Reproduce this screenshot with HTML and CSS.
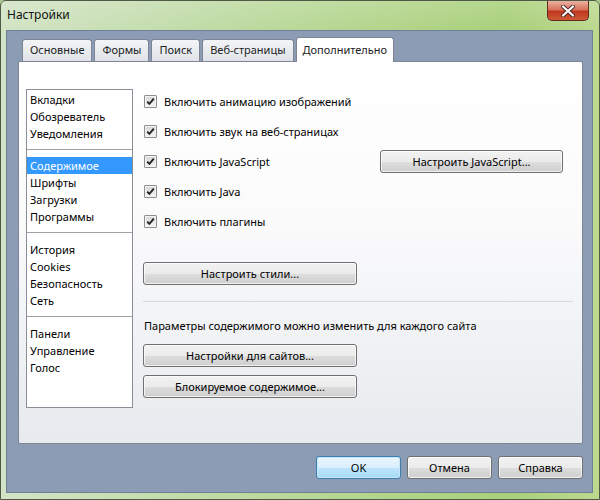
FILE: index.html
```html
<!DOCTYPE html>
<html lang="ru">

<head>
    <meta charset="UTF-8">
    <title>Настройки</title>
    <link rel="stylesheet" href="styles.css">
</head>

<body>
    <div class="window">
        <div class="titlebar">
            <span class="title">Настройки</span>
            <span class="close">
                <svg width="16" height="12" viewBox="0 0 16 12">
                    <path d="M3 1.5 L13 10.5 M13 1.5 L3 10.5" stroke="#4a2a24" stroke-width="4" stroke-linecap="round" />
                    <path d="M3 1.5 L13 10.5 M13 1.5 L3 10.5" stroke="#fff" stroke-width="2.2" stroke-linecap="round" />
                </svg>
            </span>
        </div>
        <div class="client">
            <div class="tabs">
                <div class="tab">Основные</div>
                <div class="tab">Формы</div>
                <div class="tab">Поиск</div>
                <div class="tab">Веб-страницы</div>
                <div class="tab active">Дополнительно</div>
            </div>
            <div class="panel">
                <div class="list">
                    <div class="group first">
                        <div class="item">Вкладки</div>
                        <div class="item">Обозреватель</div>
                        <div class="item">Уведомления</div>
                    </div>
                    <div class="group second">
                        <div class="item selected">Содержимое</div>
                        <div class="item">Шрифты</div>
                        <div class="item">Загрузки</div>
                        <div class="item">Программы</div>
                    </div>
                    <div class="group">
                        <div class="item">История</div>
                        <div class="item">Cookies</div>
                        <div class="item">Безопасность</div>
                        <div class="item">Сеть</div>
                    </div>
                    <div class="group last">
                        <div class="item">Панели</div>
                        <div class="item">Управление</div>
                        <div class="item">Голос</div>
                    </div>
                </div>
                <div class="content">
                    <div class="row"><span class="check"></span>Включить анимацию изображений</div>
                    <div class="row"><span class="check"></span>Включить звук на веб-страницах</div>
                    <div class="row"><span class="check"></span>Включить JavaScript
                        <button class="btn js">Настроить JavaScript...</button>
                    </div>
                    <div class="row"><span class="check"></span>Включить Java</div>
                    <div class="row"><span class="check"></span>Включить плагины</div>
                    <button class="btn wide styles">Настроить стили...</button>
                    <div class="sep"></div>
                    <div class="note">Параметры содержимого можно изменить для каждого сайта</div>
                    <button class="btn wide">Настройки для сайтов...</button>
                    <button class="btn wide">Блокируемое содержимое...</button>
                </div>
            </div>
            <div class="footer">
                <button class="btn small default">OK</button>
                <button class="btn small">Отмена</button>
                <button class="btn small">Справка</button>
            </div>
        </div>
    </div>
</body>

</html>
```
FILE: styles.css
```css
* {
    margin: 0;
    padding: 0;
    box-sizing: border-box;
}

body {
    width: 600px;
    height: 500px;
    overflow: hidden;
    font-family: "Noto Sans", "DejaVu Sans", sans-serif;
    font-size: 11px;
    color: #000;
    background: #a9c98a;
}

.window {
    width: 600px;
    height: 500px;
    border: 1px solid #4f5a46;
    border-radius: 6px 6px 0 0;
    background: linear-gradient(to right, #d3e4c6 0%, #c2dcaa 30%, #b4d68e 60%, #a9d07a 85%, #bcd98f 100%);
}

.titlebar {
    height: 29px;
    display: flex;
    align-items: flex-start;
    justify-content: space-between;
    padding: 6px 10px 0 6px;
    background: linear-gradient(to bottom, rgba(255, 255, 255, 0.15), rgba(255, 255, 255, 0));
}

.title {
    color: #111;
    font-size: 12px;
    line-height: 16px;
}

.close {
    width: 42px;
    height: 20px;
    margin-top: -6px;
    display: flex;
    align-items: center;
    justify-content: center;
    border: 1px solid #5e2a22;
    border-top: none;
    border-radius: 0 0 5px 5px;
    background: linear-gradient(to bottom, #eab2a2 0%, #d9735c 45%, #c1381f 55%, #cf5a35 100%);
}

.client {
    margin-left: 5px;
    width: 587px;
    height: 463px;
    border: 1px solid #6f7f95;
    background: #8c9cb5;
    padding: 6px 9px 0 11px;
}

.tabs {
    display: flex;
    align-items: flex-end;
    padding-left: 4px;
}

.tab {
    height: 22px;
    line-height: 20px;
    padding: 0 7px;
    margin-right: 2px;
    border: 1px solid #7d8594;
    border-bottom: none;
    border-radius: 3px 3px 0 0;
    background: linear-gradient(to bottom, #f3f4f6, #dfe3e8);
    color: #222;
}

.tab.active {
    height: 25px;
    line-height: 23px;
    margin-bottom: -1px;
    padding: 0 6px;
    background: #fff;
    position: relative;
    z-index: 1;
}

.panel {
    height: 383px;
    border: 1px solid #7d8594;
    border-radius: 0 2px 2px 2px;
    background: linear-gradient(to bottom, #ffffff 0%, #fbfbfc 40%, #e7eaee 100%);
    display: flex;
    padding: 27px 9px 0 7px;
}

.list {
    width: 108px;
    height: 319px;
    border: 1px solid #8a8e96;
    background: #fff;
}

.group {
    padding: 8px 0 7px;
    border-bottom: 1px solid #a3a3a3;
}

.group.first {
    padding-top: 1px;
}

.group.second {
    padding-top: 7px;
}

.group.last {
    border-bottom: none;
}

.item {
    height: 17px;
    line-height: 17px;
    padding-left: 3px;
    white-space: nowrap;
}

.item.selected {
    background: #3399ff;
    color: #fff;
}

.content {
    flex: 1;
    margin-left: 10px;
    margin-top: -3px;
    display: flex;
    flex-direction: column;
    align-items: flex-start;
}

.row {
    width: 100%;
    height: 30px;
    display: flex;
    align-items: center;
    padding-left: 1px;
}

.check {
    width: 13px;
    height: 13px;
    margin-right: 7px;
    border: 1px solid #8e8f8f;
    border-radius: 1px;
    background-color: #e4e4e4;
    background-image: url("data:image/svg+xml,%3Csvg xmlns='http://www.w3.org/2000/svg' width='11' height='11'%3E%3Cpath d='M2.2 5.6 L4.4 7.9 L8.8 2.6' fill='none' stroke='%23262626' stroke-width='1.9'/%3E%3C/svg%3E"), linear-gradient(to bottom, #d4d4d4, #f6f6f6);
    background-repeat: no-repeat;
    box-shadow: inset 0 0 0 1px #f4f4f4;
}

.btn {
    font-family: inherit;
    font-size: 11px;
    color: #000;
    height: 23px;
    border: 1px solid #707070;
    border-radius: 3px;
    background: linear-gradient(to bottom, #f2f2f2 0%, #ebebeb 50%, #dddddd 51%, #cfcfcf 100%);
    box-shadow: inset 0 0 0 1px rgba(255, 255, 255, 0.7);
}

.btn.js {
    width: 183px;
    margin-left: auto;
    margin-right: 10px;
}

.btn.wide {
    width: 214px;
}

.btn.styles {
    margin-top: 26px;
}

.sep {
    width: 430px;
    height: 1px;
    margin-top: 16px;
    background: #d5d8dc;
}

.note {
    margin-top: 15px;
    line-height: 17px;
    padding-left: 1px;
}

.note + .btn {
    margin-top: 10px;
}

.note + .btn + .btn {
    margin-top: 8px;
}

.footer {
    display: flex;
    justify-content: flex-end;
    gap: 6px;
    margin-top: 12px;
}

.btn.small {
    width: 85px;
}

.btn.default {
    border-color: #3c7fb1;
    background: linear-gradient(to bottom, #eaf6fd 0%, #d9f0fc 50%, #bee6fd 51%, #a7d9f5 100%);
    box-shadow: inset 0 0 0 1px #c8e6f8;
}
```
